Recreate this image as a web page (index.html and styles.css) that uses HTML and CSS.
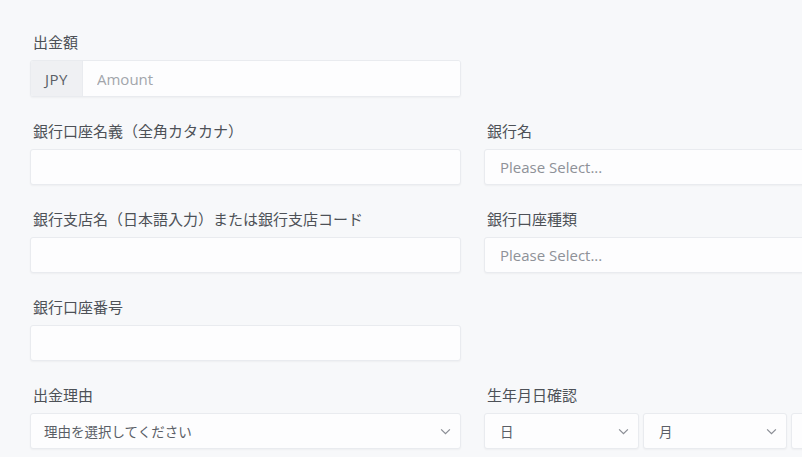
FILE: index.html
```html
<!DOCTYPE html>
<html lang="ja">
<head>
    <meta charset="UTF-8">
    <meta name="viewport" content="width=device-width, initial-scale=1.0">
    <link rel="stylesheet" href="styles.css">
    <title>出金申請</title>
</head>
<body>
    <!-- withdraw form -->
    <form class="frm">
        <div class="fld">
            <label class="lbl">出金額</label>
            <div class="grp">
                <span class="addon">JPY</span>
                <input type="text" class="inp inp-grp" placeholder="Amount">
            </div>
        </div>
        <div class="fld"></div>

        <div class="fld">
            <label class="lbl">銀行口座名義（全角カタカナ）</label>
            <input type="text" class="inp">
        </div>
        <div class="fld">
            <label class="lbl">銀行名</label>
            <div class="sel sel-plain">Please Select...</div>
        </div>

        <div class="fld">
            <label class="lbl">銀行支店名（日本語入力）または銀行支店コード</label>
            <input type="text" class="inp">
        </div>
        <div class="fld">
            <label class="lbl">銀行口座種類</label>
            <div class="sel sel-plain">Please Select...</div>
        </div>

        <div class="fld">
            <label class="lbl">銀行口座番号</label>
            <input type="text" class="inp">
        </div>
        <div class="fld"></div>

        <div class="fld">
            <label class="lbl">出金理由</label>
            <div class="sel">
                <span class="sel-txt">理由を選択してください</span>
                <svg class="chev" viewBox="0 0 12 8"><path d="M1 1.5l5 5 5-5"/></svg>
            </div>
        </div>
        <div class="fld">
            <label class="lbl">生年月日確認</label>
            <div class="dob">
                <div class="sel">
                    <span class="sel-txt">日</span>
                    <svg class="chev" viewBox="0 0 12 8"><path d="M1 1.5l5 5 5-5"/></svg>
                </div>
                <div class="sel">
                    <span class="sel-txt">月</span>
                    <svg class="chev" viewBox="0 0 12 8"><path d="M1 1.5l5 5 5-5"/></svg>
                </div>
                <!-- year select, runs off the right edge -->
                <div class="sel"></div>
            </div>
        </div>
    </form>
</body>
</html>
```

FILE: styles.css
```css
*{
    margin: 0;
    padding: 0;
    box-sizing: border-box;
}
html, body{
    overflow: hidden;
}
body{
    background-color: #f7f8fa;
    font-family: 'Open Sans', 'Noto Sans CJK JP', sans-serif;
    color: #474b52;
    padding: 32px 0 0 30px;
    width: 802px;
    height: 457px;
}
.frm{
    display: grid;
    grid-template-columns: 431px 431px;
    column-gap: 23px;
}
.fld{
    display: flex;
    flex-direction: column;
    margin-bottom: 24px;
}
.lbl{
    font-family: 'Noto Sans CJK JP', sans-serif;
    font-size: 15px;
    line-height: 20px;
    height: 20px;
    margin-bottom: 8px;
    padding-left: 3px;
    color: #4d5157;
}
.inp{
    height: 36px;
    width: 100%;
    border: 1px solid #e9ebef;
    border-radius: 3px;
    background-color: #fdfdfe;
    box-shadow: 0 1px 2px rgba(0, 0, 0, 0.04);
    outline: none;
    font-family: inherit;
    font-size: 15px;
    padding: 0 14px;
}
.inp::placeholder{
    color: #a2a5ab;
}
.grp{
    display: flex;
    height: 37px;
    border: 1px solid #e9ebef;
    border-radius: 3px;
    background-color: #fdfdfe;
    box-shadow: 0 1px 2px rgba(0, 0, 0, 0.04);
    overflow: hidden;
}
.addon{
    width: 52px;
    display: flex;
    align-items: center;
    justify-content: center;
    background-color: #eff0f3;
    font-size: 15px;
    letter-spacing: 0.5px;
    color: #5a5e66;
    border-right: 1px solid #e9ebef;
}
.inp-grp{
    flex: 1;
    height: 100%;
    border: none;
    box-shadow: none;
    border-radius: 0;
}
.sel{
    height: 36px;
    border: 1px solid #e9ebef;
    border-radius: 3px;
    background-color: #fdfdfe;
    box-shadow: 0 1px 2px rgba(0, 0, 0, 0.04);
    display: flex;
    align-items: center;
    justify-content: space-between;
    padding: 0 9px 0 13px;
    font-size: 13.5px;
    color: #5a5e66;
}
.sel-plain{
    font-size: 15px;
    color: #8e9198;
    padding-left: 15px;
}
.chev{
    width: 11px;
    height: 7px;
    fill: none;
    stroke: #8a8d94;
    stroke-width: 1.4;
}
.dob{
    display: grid;
    grid-template-columns: 155px 144px 1fr;
    column-gap: 4px;
}
.dob .sel{
    padding-left: 15px;
}
```
